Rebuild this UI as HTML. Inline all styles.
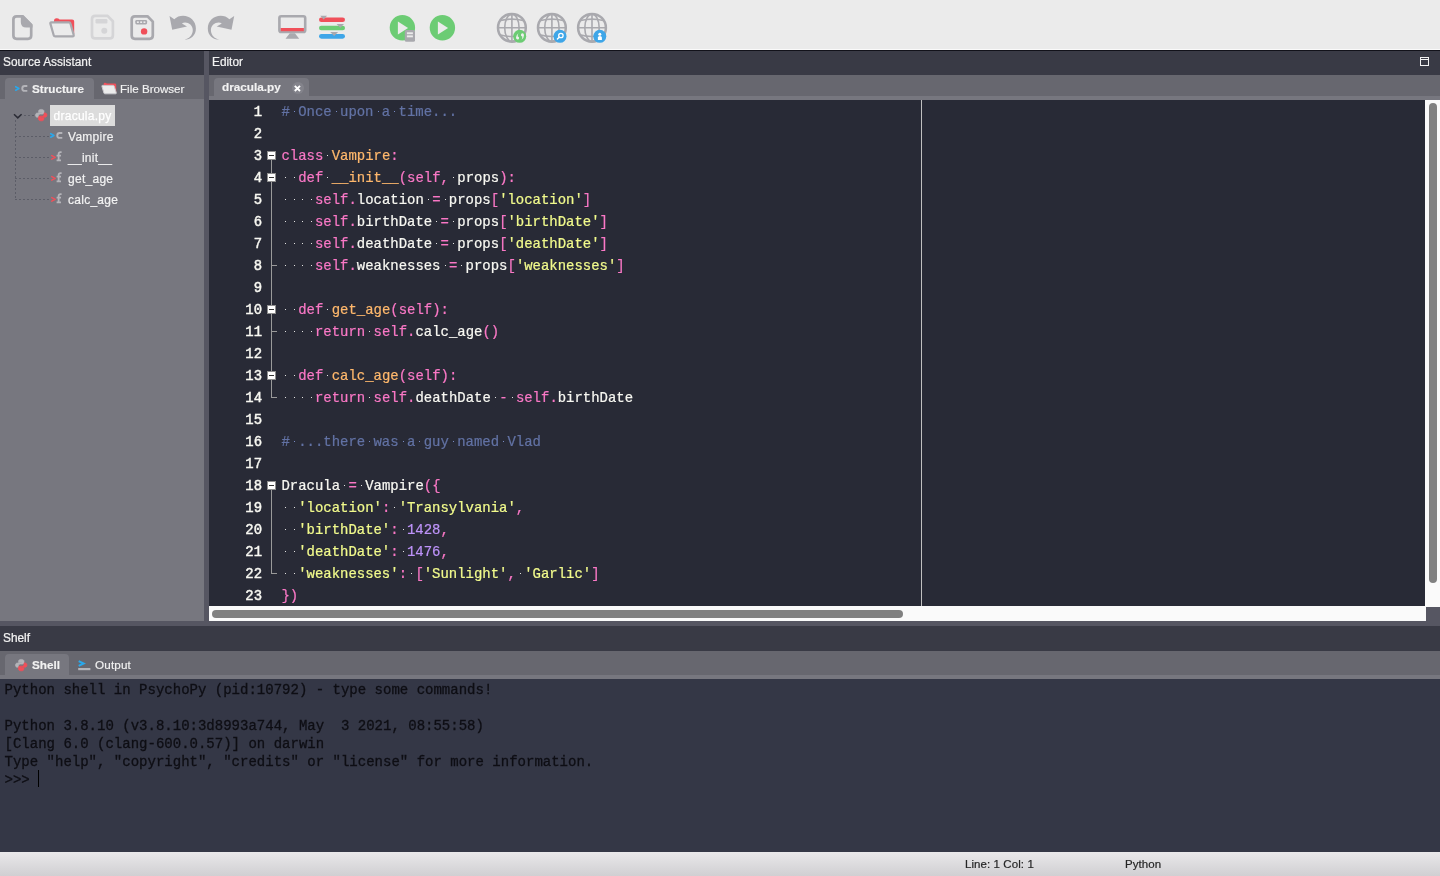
<!DOCTYPE html>
<html>
<head>
<meta charset="utf-8">
<title>PsychoPy Coder</title>
<style>
html,body{margin:0;padding:0;}
body{width:1440px;height:876px;overflow:hidden;position:relative;background:#ebebeb;font-family:"Liberation Sans",sans-serif;}
.abs{position:absolute;}
#wrap{position:absolute;left:0;top:0;width:1440px;height:876px;will-change:transform;}
#toolbar{left:0;top:0;width:1440px;height:49px;background:#ebebeb;}
#tbhl{left:0;top:49px;width:1440px;height:1px;background:#fafafa;}
#tbsh{left:0;top:50px;width:1440px;height:1px;background:#12121a;}
.hdr{background:#393a45;color:#f2f2f2;-webkit-text-stroke:0.22px;font-size:11.85px;line-height:23px;height:24px;}
.hdr span{position:absolute;left:3px;top:0;white-space:nowrap;}
.strip{background:#67676f;}
.light{background:#77777f;}
.div{background:#565662;}
.tab{background:#77777f;border-radius:4px 4px 0 0;}
.tabtxt{-webkit-text-stroke:0.15px;color:#f2f2f2;font-size:12px;line-height:14px;white-space:nowrap;}
.b{font-weight:bold;}
/* tree */
.tr{-webkit-text-stroke:0.2px;color:#f2f2f2;font-size:12px;letter-spacing:0.27px;margin-top:0.9px;line-height:21px;height:21px;white-space:nowrap;}
.dh{height:1px;background:repeating-linear-gradient(90deg,#5c5d67 0 2px,transparent 2px 4px);}
.dv{width:1px;background:repeating-linear-gradient(180deg,#5c5d67 0 2px,transparent 2px 4px);}
/* editor */
#editor{left:209px;top:100px;width:1216px;height:506px;background:#282a36;overflow:hidden;}
.ln{position:absolute;left:0;margin-top:1px;width:53px;text-align:right;color:#f8f8f2;font-family:"Liberation Mono",monospace;font-size:13.93px;line-height:22px;height:22px;-webkit-text-stroke:0.45px;}
.cl{position:absolute;left:72.4px;margin-top:1px;-webkit-text-stroke:0.22px;color:#f8f8f2;font-family:"Liberation Mono",monospace;font-size:13.96px;line-height:22px;height:22px;white-space:pre;}
.k{color:#fa78c6}.c{color:#6272a4}.o{color:#ffb86c}.s{color:#f1fa8c}.n{color:#bd93f9}.w{color:#f8f8f2}

.cl b,.ln b{font-weight:normal}
.cl i{font-style:normal}
.dt{position:absolute;width:1px;height:1px;background:#e4e4e2;}
.dt.dc{background:#7a8cc4;}
.fb{position:absolute;left:58px;width:7px;height:7px;background:#fff;border:1px solid #8e8e8e;}
.fb u{position:absolute;left:1px;top:3px;width:5px;height:1px;background:#333;}
.fv{position:absolute;left:62px;width:1px;background:#9a9a9a;}
.ft{position:absolute;left:62px;width:6px;height:1px;background:#9a9a9a;}
.edge{position:absolute;left:712px;top:0;width:1px;height:506px;background:#c0c0c0;}
/* shell */
#shell{left:0;top:679px;width:1440px;height:173px;background:#343746;}
.sl{position:absolute;left:4.5px;margin-top:0.5px;-webkit-text-stroke:0.3px;color:#0e0e14;font-family:"Liberation Mono",monospace;font-size:14.02px;line-height:18px;height:18px;white-space:pre;}
#status{left:0;top:852px;width:1440px;height:24px;background:linear-gradient(#e9e8ea,#d0cfd2);color:#262626;font-size:11.5px;letter-spacing:0.08px;-webkit-text-stroke:0.2px;}
</style>
</head>
<body>
<div id="wrap">
<!-- TOOLBAR -->
<div id="toolbar" class="abs"></div>
<!--TB--><svg class="abs" style="left:0;top:0" width="640" height="49" viewBox="0 0 640 49">
<!-- new file -->
<g fill="none" stroke="#a9a9ae" stroke-width="2.7" stroke-linejoin="round">
<path d="M22.6,16.3 H16.6 Q13.4,16.3 13.4,19.5 V35.6 Q13.4,38.8 16.6,38.8 H28 Q31.2,38.8 31.2,35.6 V24.9 Z"/>
</g>
<path d="M20.8,15.2 H23.2 L32.5,24.4 V27.6 H26.4 Q20.8,27.6 20.8,22 Z" fill="#a9a9ae"/>
<!-- open folder -->
<path d="M54,21 Q54,18.2 56.5,18.2 Q58.6,18.2 59.6,19.6 H72.2 Q74.2,19.6 74.2,21.6 V34 H54 Z" fill="#f0505a"/>
<path d="M50.4,23.6 Q50,22.4 51.4,22.4 H69 Q70.2,22.4 70.5,23.6 L73.7,35 Q74,36.4 72.6,36.4 H55.2 Q54,36.4 53.7,35.2 Z" fill="#ebebeb" stroke="#a9a9ae" stroke-width="2.2" stroke-linejoin="round"/>
<!-- save (disabled) -->
<g fill="none" stroke="#d5d5d7" stroke-width="2.7" stroke-linejoin="round">
<path d="M95.2,15.9 H107.6 L112.9,21.2 V35.2 Q112.9,38.4 109.7,38.4 H95.2 Q92,38.4 92,35.2 V19.1 Q92,15.9 95.2,15.9 Z"/>
</g>
<rect x="95.5" y="19" width="11.9" height="4.5" rx="1.2" fill="#d5d5d7"/>
<circle cx="104.3" cy="30.7" r="3" fill="#d5d5d7"/>
<!-- save as -->
<g fill="none" stroke="#a9a9ae" stroke-width="2.7" stroke-linejoin="round">
<path d="M134.9,16.3 H147.5 L152.8,21.6 V35.6 Q152.8,38.8 149.6,38.8 H134.9 Q131.7,38.8 131.7,35.6 V19.5 Q131.7,16.3 134.9,16.3 Z"/>
</g>
<rect x="135.3" y="19.9" width="11.8" height="4.6" rx="1.4" fill="#a9a9ae"/>
<rect x="136.9" y="21.4" width="1.9" height="1.6" fill="#ebebeb"/><rect x="140.2" y="21.4" width="1.9" height="1.6" fill="#ebebeb"/><rect x="143.5" y="21.4" width="1.9" height="1.6" fill="#ebebeb"/>
<circle cx="144.1" cy="31.4" r="3.2" fill="#f0505a"/>
<!-- undo / redo -->
<path id="undo" d="M169.5,16.1 L174.3,19.2 Q178,15.8 183,15.8 C190,15.8 195.9,21 195.9,28.5 C195.9,35.4 190.8,39.8 184.3,39.8 C188.8,38.9 192.8,35.2 192.8,30 C192.8,25.5 189,22.4 185.1,22.4 Q183.3,22.4 181.9,23.5 L187,26.6 L172.2,29.8 Z" fill="#a9a9ae"/>
<use href="#undo" transform="translate(403.7,0) scale(-1,1)"/>
<!-- monitor -->
<rect x="279.4" y="16.2" width="25.8" height="15.8" rx="1.8" fill="none" stroke="#a9a9ae" stroke-width="2.6"/>
<rect x="280.7" y="28" width="23.2" height="3.2" fill="#f0505a"/>
<path d="M289.8,33.2 H294.9 L299.2,38.8 H285.5 Z" fill="#a9a9ae"/>
<!-- prefs sliders -->
<rect x="319" y="17.4" width="26" height="4.7" rx="2.35" fill="#f0505a"/>
<rect x="319" y="25.8" width="26" height="4.5" rx="2.25" fill="#6ccc74"/>
<rect x="319" y="33.9" width="26" height="4.9" rx="2.45" fill="#3ea6e8"/>
<path d="M320.2,15.8 H327.1 L323.65,19.4 Z M336.6,24 H344 L340.3,27.7 Z M330.2,31.9 H338.1 L334.15,36 Z" fill="#a9a9ae"/>
<!-- run in runner -->
<circle cx="402.4" cy="27.8" r="12.7" fill="#6ccc74"/>
<path d="M397.9,21.6 L408.1,28 L397.9,34.4 Z" fill="#ebebeb"/>
<rect x="404.8" y="30.1" width="10.2" height="11.7" rx="1.6" fill="#a9a9ae"/>
<rect x="406.9" y="32.3" width="6" height="1.9" fill="#ebebeb"/><rect x="406.9" y="35.4" width="6" height="1.9" fill="#ebebeb"/>
<!-- run -->
<circle cx="442.4" cy="27.8" r="12.7" fill="#6ccc74"/>
<path d="M437.9,21.6 L448.1,28 L437.9,34.4 Z" fill="#ebebeb"/>
<!-- globes -->
<g id="globe" fill="none" stroke="#a9a9ae">
<circle cx="511.9" cy="27.8" r="13.9" stroke-width="2.5"/>
<g stroke-width="1.6">
<path d="M511.9,14 V41.6 M498,27.8 H525.8"/>
<ellipse cx="511.9" cy="27.8" rx="7.2" ry="13.7"/>
<path d="M500.6,20.6 Q511.9,17.6 523.2,20.6 M500.6,35 Q511.9,38 523.2,35"/>
</g>
</g>
<use href="#globe" x="40"/>
<use href="#globe" x="80.1"/>
<circle cx="519.7" cy="36.3" r="6.5" fill="#6ccc74"/>
<path id="cm" d="M518.5,33.2 Q516,35 516,37.6 Q516,39.6 517.6,39.6 Q519.1,39.6 519.1,38 Q519.1,36.6 517.7,36.5 Q517.5,34.8 518.5,33.2 Z" fill="#f0f0f0"/>
<use href="#cm" transform="rotate(180 520 36.45)"/>
<circle cx="560" cy="36.3" r="6.5" fill="#3ea6e8"/>
<circle cx="560.9" cy="35.5" r="2.2" fill="none" stroke="#fff" stroke-width="1.3"/>
<path d="M559.2,37.2 L557.4,39.1" stroke="#fff" stroke-width="1.4" stroke-linecap="round"/>
<circle cx="599.8" cy="36.3" r="6.5" fill="#3ea6e8"/>
<circle cx="599.8" cy="34.2" r="1.5" fill="#fff"/>
<path d="M597.9,39.9 V37.6 Q597.9,35.9 599.9,35.9 Q601.9,35.9 601.9,37.6 V39.9 Z" fill="#fff"/>
</svg>
<!--/TB-->
<div id="tbhl" class="abs"></div>
<div id="tbsh" class="abs"></div>

<!-- LEFT PANEL -->
<div class="abs hdr" style="left:0;top:51px;width:204px;"><span>Source Assistant</span></div>
<div class="abs strip" style="left:0;top:75px;width:204px;height:24px;"></div>
<div class="abs tab" style="left:5px;top:78px;width:89px;height:21px;"></div>
<div class="abs light" id="tree" style="left:0;top:99px;width:204px;height:522px;"></div>

<!--LF--><svg width="0" height="0" style="position:absolute">
<defs>
<g id="icC"><path d="M0.7,1.7 L3.9,3.45 L0.7,5.2" fill="none" stroke-width="1.6" stroke-linejoin="round" stroke-linecap="round"/><path d="M12.3,1 H9.7 A2.45,2.45 0 0 0 9.7,5.9 H12.3" fill="none" stroke="#b4b4b9" stroke-width="1.9"/></g>
<g id="icF"><path d="M0.8,4.6 L4.1,6.35 L0.8,8.1" fill="none" stroke="#f0505a" stroke-width="1.6" stroke-linejoin="round" stroke-linecap="round"/><path d="M10.6,1.1 H9.6 Q7.6,1.1 7.6,3.1 V9.2 M5.6,4.6 H10 M5.6,9.3 H10" fill="none" stroke="#b4b4b9" stroke-width="1.8"/></g>
<path id="pyh" d="M6.2,0 C4,0 3.3,0.9 3.3,2 V3.3 H6.3 V3.9 H2.2 C0.8,3.9 0,4.9 0,6.2 C0,7.6 0.8,8.6 2.2,8.6 H3.2 V7.1 C3.2,5.9 4.1,5.1 5.2,5.1 H8 C8.8,5.1 9.2,4.5 9.2,3.7 V2 C9.2,0.9 8.4,0 6.2,0 Z"/>
<g id="icPy" stroke-width="0.7" stroke-linejoin="round" transform="translate(0.5,0.4) scale(0.925)"><use href="#pyh" fill="#b4b4b9" stroke="#b4b4b9"/><use href="#pyh" fill="#f0505a" stroke="#f0505a" transform="rotate(180 6.2 6.2)"/></g>
</defs>
</svg>
<!-- left tabs -->
<svg class="abs" style="left:14.6px;top:84.6px;overflow:visible" width="13" height="8"><use href="#icC" stroke="#29a8ec"/></svg>
<div class="abs tabtxt b" style="left:32px;top:82px;font-size:11.7px;">Structure</div>
<svg class="abs" style="left:101px;top:82px;overflow:visible" width="17" height="13" viewBox="0 0 17 13"><path d="M2.6,2.2 Q2.6,0.8 4,0.8 Q5.2,0.8 5.8,1.6 H14 Q15.2,1.6 15.2,2.8 V10 H2.6 Z" fill="#f0505a"/><path d="M0.9,4.3 Q0.6,3.4 1.6,3.4 H12.2 Q13,3.4 13.2,4.2 L15.3,10.8 Q15.5,11.8 14.5,11.8 H3.9 Q3.1,11.8 2.9,11 Z" fill="#ececec" stroke="#c9c9cd" stroke-width="1"/></svg>
<div class="abs tabtxt" style="left:120px;top:82px;font-size:11.6px;">File Browser</div>
<!-- tree -->
<div class="abs" style="left:50px;top:105px;width:65px;height:21px;background:#dcdcdc;"></div>
<svg class="abs" style="left:13px;top:113px;overflow:visible" width="10" height="7"><path d="M1,1.2 L4.8,4.9 L8.6,1.2" fill="none" stroke="#2b2c36" stroke-width="1.5"/></svg>
<div class="abs dh" style="left:23.5px;top:115px;width:10px;"></div>
<div class="abs dv" style="left:15px;top:120px;height:80px;"></div>
<div class="abs dh" style="left:15px;top:136px;width:35px;"></div>
<div class="abs dh" style="left:15px;top:157px;width:35px;"></div>
<div class="abs dh" style="left:15px;top:178px;width:35px;"></div>
<div class="abs dh" style="left:15px;top:199px;width:35px;"></div>
<svg class="abs" style="left:34.9px;top:108.8px;overflow:visible" width="13" height="13"><use href="#icPy"/></svg>
<div class="abs tr" style="left:53.5px;top:105px;color:#fff;-webkit-text-stroke:0.25px #fff;">dracula.py</div>
<svg class="abs" style="left:49.9px;top:132.2px;overflow:visible" width="13" height="8"><use href="#icC" stroke="#29a8ec"/></svg>
<div class="abs tr" style="left:68px;top:126px;">Vampire</div>
<svg class="abs" style="left:50.8px;top:151.2px;overflow:visible" width="13" height="11"><use href="#icF"/></svg>
<div class="abs tr" style="left:68px;top:147px;">__init__</div>
<svg class="abs" style="left:50.8px;top:172.2px;overflow:visible" width="13" height="11"><use href="#icF"/></svg>
<div class="abs tr" style="left:68px;top:168px;">get_age</div>
<svg class="abs" style="left:50.8px;top:193.2px;overflow:visible" width="13" height="11"><use href="#icF"/></svg>
<div class="abs tr" style="left:68px;top:189px;">calc_age</div>
<!--/LF-->
<!-- VERTICAL DIVIDER -->
<div class="abs div" style="left:204px;top:51px;width:5px;height:570px;"></div>

<!-- EDITOR PANEL -->
<div class="abs hdr" style="left:209px;top:51px;width:1231px;"><span>Editor</span></div>
<div class="abs strip" style="left:209px;top:75px;width:1231px;height:21px;"></div>
<div class="abs tab" style="left:214px;top:78px;width:95px;height:18px;"></div>
<div class="abs light" style="left:209px;top:96px;width:1231px;height:4px;"></div>
<div id="editor" class="abs">
<div class="ln" style="top:0px">1</div>
<div class="cl" style="top:0px"><b class="c"># Once upon a time...</b></div>
<div class="ln" style="top:22px">2</div>
<div class="ln" style="top:44px">3</div>
<div class="cl" style="top:44px"><b class="k">class</b> <b class="o">Vampire</b><b class="k">:</b></div>
<div class="ln" style="top:66px">4</div>
<div class="cl" style="top:66px">  <b class="k">def</b> <b class="o">__init__</b><b class="k">(</b><b class="k">self</b><b class="k">,</b> props<b class="k">):</b></div>
<div class="ln" style="top:88px">5</div>
<div class="cl" style="top:88px">    <b class="k">self</b><b class="k">.</b>location <b class="k">=</b> props<b class="k">[</b><b class="s">'location'</b><b class="k">]</b></div>
<div class="ln" style="top:110px">6</div>
<div class="cl" style="top:110px">    <b class="k">self</b><b class="k">.</b>birthDate <b class="k">=</b> props<b class="k">[</b><b class="s">'birthDate'</b><b class="k">]</b></div>
<div class="ln" style="top:132px">7</div>
<div class="cl" style="top:132px">    <b class="k">self</b><b class="k">.</b>deathDate <b class="k">=</b> props<b class="k">[</b><b class="s">'deathDate'</b><b class="k">]</b></div>
<div class="ln" style="top:154px">8</div>
<div class="cl" style="top:154px">    <b class="k">self</b><b class="k">.</b>weaknesses <b class="k">=</b> props<b class="k">[</b><b class="s">'weaknesses'</b><b class="k">]</b></div>
<div class="ln" style="top:176px">9</div>
<div class="ln" style="top:198px">10</div>
<div class="cl" style="top:198px">  <b class="k">def</b> <b class="o">get_age</b><b class="k">(</b><b class="k">self</b><b class="k">):</b></div>
<div class="ln" style="top:220px">11</div>
<div class="cl" style="top:220px">    <b class="k">return</b> <b class="k">self</b><b class="k">.</b>calc_age<b class="k">()</b></div>
<div class="ln" style="top:242px">12</div>
<div class="ln" style="top:264px">13</div>
<div class="cl" style="top:264px">  <b class="k">def</b> <b class="o">calc_age</b><b class="k">(</b><b class="k">self</b><b class="k">):</b></div>
<div class="ln" style="top:286px">14</div>
<div class="cl" style="top:286px">    <b class="k">return</b> <b class="k">self</b><b class="k">.</b>deathDate <b class="k">-</b> <b class="k">self</b><b class="k">.</b>birthDate</div>
<div class="ln" style="top:308px">15</div>
<div class="ln" style="top:330px">16</div>
<div class="cl" style="top:330px"><b class="c"># ...there was a guy named Vlad</b></div>
<div class="ln" style="top:352px">17</div>
<div class="ln" style="top:374px">18</div>
<div class="cl" style="top:374px">Dracula <b class="k">=</b> Vampire<b class="k">({</b></div>
<div class="ln" style="top:396px">19</div>
<div class="cl" style="top:396px">  <b class="s">'location'</b><b class="k">:</b> <b class="s">'Transylvania'</b><b class="k">,</b></div>
<div class="ln" style="top:418px">20</div>
<div class="cl" style="top:418px">  <b class="s">'birthDate'</b><b class="k">:</b> <b class="n">1428</b><b class="k">,</b></div>
<div class="ln" style="top:440px">21</div>
<div class="cl" style="top:440px">  <b class="s">'deathDate'</b><b class="k">:</b> <b class="n">1476</b><b class="k">,</b></div>
<div class="ln" style="top:462px">22</div>
<div class="cl" style="top:462px">  <b class="s">'weaknesses'</b><b class="k">:</b> <b class="k">[</b><b class="s">'Sunlight'</b><b class="k">,</b> <b class="s">'Garlic'</b><b class="k">]</b></div>
<div class="ln" style="top:484px">23</div>
<div class="cl" style="top:484px"><b class="k">})</b></div>
<i class="dt dc" style="left:85px;top:11px"></i>
<i class="dt dc" style="left:127px;top:11px"></i>
<i class="dt dc" style="left:169px;top:11px"></i>
<i class="dt dc" style="left:185px;top:11px"></i>
<i class="dt" style="left:118px;top:55px"></i>
<i class="dt" style="left:76px;top:77px"></i>
<i class="dt" style="left:85px;top:77px"></i>
<i class="dt" style="left:118px;top:77px"></i>
<i class="dt" style="left:244px;top:77px"></i>
<i class="dt" style="left:76px;top:99px"></i>
<i class="dt" style="left:85px;top:99px"></i>
<i class="dt" style="left:93px;top:99px"></i>
<i class="dt" style="left:102px;top:99px"></i>
<i class="dt" style="left:219px;top:99px"></i>
<i class="dt" style="left:236px;top:99px"></i>
<i class="dt" style="left:76px;top:121px"></i>
<i class="dt" style="left:85px;top:121px"></i>
<i class="dt" style="left:93px;top:121px"></i>
<i class="dt" style="left:102px;top:121px"></i>
<i class="dt" style="left:227px;top:121px"></i>
<i class="dt" style="left:244px;top:121px"></i>
<i class="dt" style="left:76px;top:143px"></i>
<i class="dt" style="left:85px;top:143px"></i>
<i class="dt" style="left:93px;top:143px"></i>
<i class="dt" style="left:102px;top:143px"></i>
<i class="dt" style="left:227px;top:143px"></i>
<i class="dt" style="left:244px;top:143px"></i>
<i class="dt" style="left:76px;top:165px"></i>
<i class="dt" style="left:85px;top:165px"></i>
<i class="dt" style="left:93px;top:165px"></i>
<i class="dt" style="left:102px;top:165px"></i>
<i class="dt" style="left:236px;top:165px"></i>
<i class="dt" style="left:252px;top:165px"></i>
<i class="dt" style="left:76px;top:209px"></i>
<i class="dt" style="left:85px;top:209px"></i>
<i class="dt" style="left:118px;top:209px"></i>
<i class="dt" style="left:76px;top:231px"></i>
<i class="dt" style="left:85px;top:231px"></i>
<i class="dt" style="left:93px;top:231px"></i>
<i class="dt" style="left:102px;top:231px"></i>
<i class="dt" style="left:160px;top:231px"></i>
<i class="dt" style="left:76px;top:275px"></i>
<i class="dt" style="left:85px;top:275px"></i>
<i class="dt" style="left:118px;top:275px"></i>
<i class="dt" style="left:76px;top:297px"></i>
<i class="dt" style="left:85px;top:297px"></i>
<i class="dt" style="left:93px;top:297px"></i>
<i class="dt" style="left:102px;top:297px"></i>
<i class="dt" style="left:160px;top:297px"></i>
<i class="dt" style="left:286px;top:297px"></i>
<i class="dt" style="left:303px;top:297px"></i>
<i class="dt dc" style="left:85px;top:341px"></i>
<i class="dt dc" style="left:160px;top:341px"></i>
<i class="dt dc" style="left:194px;top:341px"></i>
<i class="dt dc" style="left:210px;top:341px"></i>
<i class="dt dc" style="left:244px;top:341px"></i>
<i class="dt dc" style="left:294px;top:341px"></i>
<i class="dt" style="left:135px;top:385px"></i>
<i class="dt" style="left:152px;top:385px"></i>
<i class="dt" style="left:76px;top:407px"></i>
<i class="dt" style="left:85px;top:407px"></i>
<i class="dt" style="left:185px;top:407px"></i>
<i class="dt" style="left:76px;top:429px"></i>
<i class="dt" style="left:85px;top:429px"></i>
<i class="dt" style="left:194px;top:429px"></i>
<i class="dt" style="left:76px;top:451px"></i>
<i class="dt" style="left:85px;top:451px"></i>
<i class="dt" style="left:194px;top:451px"></i>
<i class="dt" style="left:76px;top:473px"></i>
<i class="dt" style="left:85px;top:473px"></i>
<i class="dt" style="left:202px;top:473px"></i>
<i class="dt" style="left:311px;top:473px"></i>
<div class="fv" style="top:60px;height:238px"></div>
<div class="fv" style="top:390px;height:84px"></div>
<div class="fb" style="top:51px"><u></u></div>
<div class="fb" style="top:73px"><u></u></div>
<div class="fb" style="top:205px"><u></u></div>
<div class="fb" style="top:271px"><u></u></div>
<div class="fb" style="top:381px"><u></u></div>
<div class="ft" style="top:165px"></div>
<div class="ft" style="top:231px"></div>
<div class="ft" style="top:297px"></div>
<div class="ft" style="top:473px"></div>
<div class="edge"></div>

</div>
<!-- scrollbars -->
<div class="abs" style="left:1425px;top:100px;width:15px;height:507px;background:#fafafa;"></div>
<div class="abs" style="left:1429px;top:103px;width:8px;height:480px;background:#808080;border-radius:4px;"></div>
<div class="abs" style="left:209px;top:606px;width:1217px;height:15px;background:#fafafa;"></div>
<div class="abs" style="left:212px;top:610px;width:691px;height:8px;background:#808080;border-radius:4px;"></div>
<div class="abs div" style="left:1426px;top:607px;width:14px;height:14px;"></div>

<!-- HORIZONTAL DIVIDER -->
<div class="abs div" style="left:0;top:621px;width:1440px;height:5px;"></div>

<!-- SHELF -->
<div class="abs hdr" style="left:0;top:626px;width:1440px;height:25px;line-height:25px;"><span>Shelf</span></div>
<div class="abs strip" style="left:0;top:651px;width:1440px;height:24px;"></div>
<div class="abs tab" style="left:5px;top:654px;width:64px;height:21px;"></div>
<div class="abs light" style="left:0;top:675px;width:1440px;height:4px;"></div>
<div id="shell" class="abs"><!--SH--><div class="sl" style="top:1px">Python shell in PsychoPy (pid:10792) - type some commands!</div>
<div class="sl" style="top:37px">Python 3.8.10 (v3.8.10:3d8993a744, May  3 2021, 08:55:58)</div>
<div class="sl" style="top:55px">[Clang 6.0 (clang-600.0.57)] on darwin</div>
<div class="sl" style="top:73px">Type "help", "copyright", "credits" or "license" for more information.</div>
<div class="sl" style="top:91px">&gt;&gt;&gt; </div>
<div class="abs" style="left:38px;top:91px;width:1px;height:17px;background:#000;"></div>
<!--/SH--></div>

<!--RS--><!-- editor tab -->
<div class="abs tabtxt b" style="left:222px;top:80px;font-size:11.75px;">dracula.py</div>
<div class="abs" style="left:291.5px;top:82px;width:12px;height:12px;border-radius:6px;background:#83838b;"></div>
<svg class="abs" style="left:294px;top:84.5px;overflow:visible" width="7" height="7"><path d="M0.8,0.8 L6,6 M6,0.8 L0.8,6" stroke="#ffffff" stroke-width="1.9" fill="none"/></svg>
<!-- maximize -->
<svg class="abs" style="left:1420px;top:57px;overflow:visible" width="9" height="9"><rect x="0.5" y="0.5" width="8" height="8" fill="none" stroke="#f2f2f2" stroke-width="1"/><rect x="0.5" y="2" width="8" height="1" fill="#f2f2f2"/></svg>
<!-- shelf tabs -->
<svg class="abs" style="left:14.8px;top:658.8px;overflow:visible" width="13" height="13"><use href="#icPy"/></svg>
<div class="abs tabtxt b" style="left:32px;top:658px;font-size:11.7px;">Shell</div>
<svg class="abs" style="left:77.5px;top:659px;overflow:visible" width="13" height="12"><path d="M0.7,2.1 L5.6,4.5 L0.7,6.9" fill="none" stroke="#29a8ec" stroke-width="2.1"/><rect x="0.2" y="9" width="12.2" height="2.2" fill="#b4b4b9"/></svg>
<div class="abs tabtxt" style="left:95px;top:658px;font-size:11.7px;letter-spacing:0.15px;">Output</div>
<!--/RS-->
<!-- STATUS BAR -->
<div id="status" class="abs"><span class="abs" style="left:965px;top:5px;line-height:14px;white-space:nowrap;">Line: 1 Col: 1</span><span class="abs" style="left:1125px;top:5px;line-height:14px;white-space:nowrap;">Python</span></div>
</div>
</body>
</html>
